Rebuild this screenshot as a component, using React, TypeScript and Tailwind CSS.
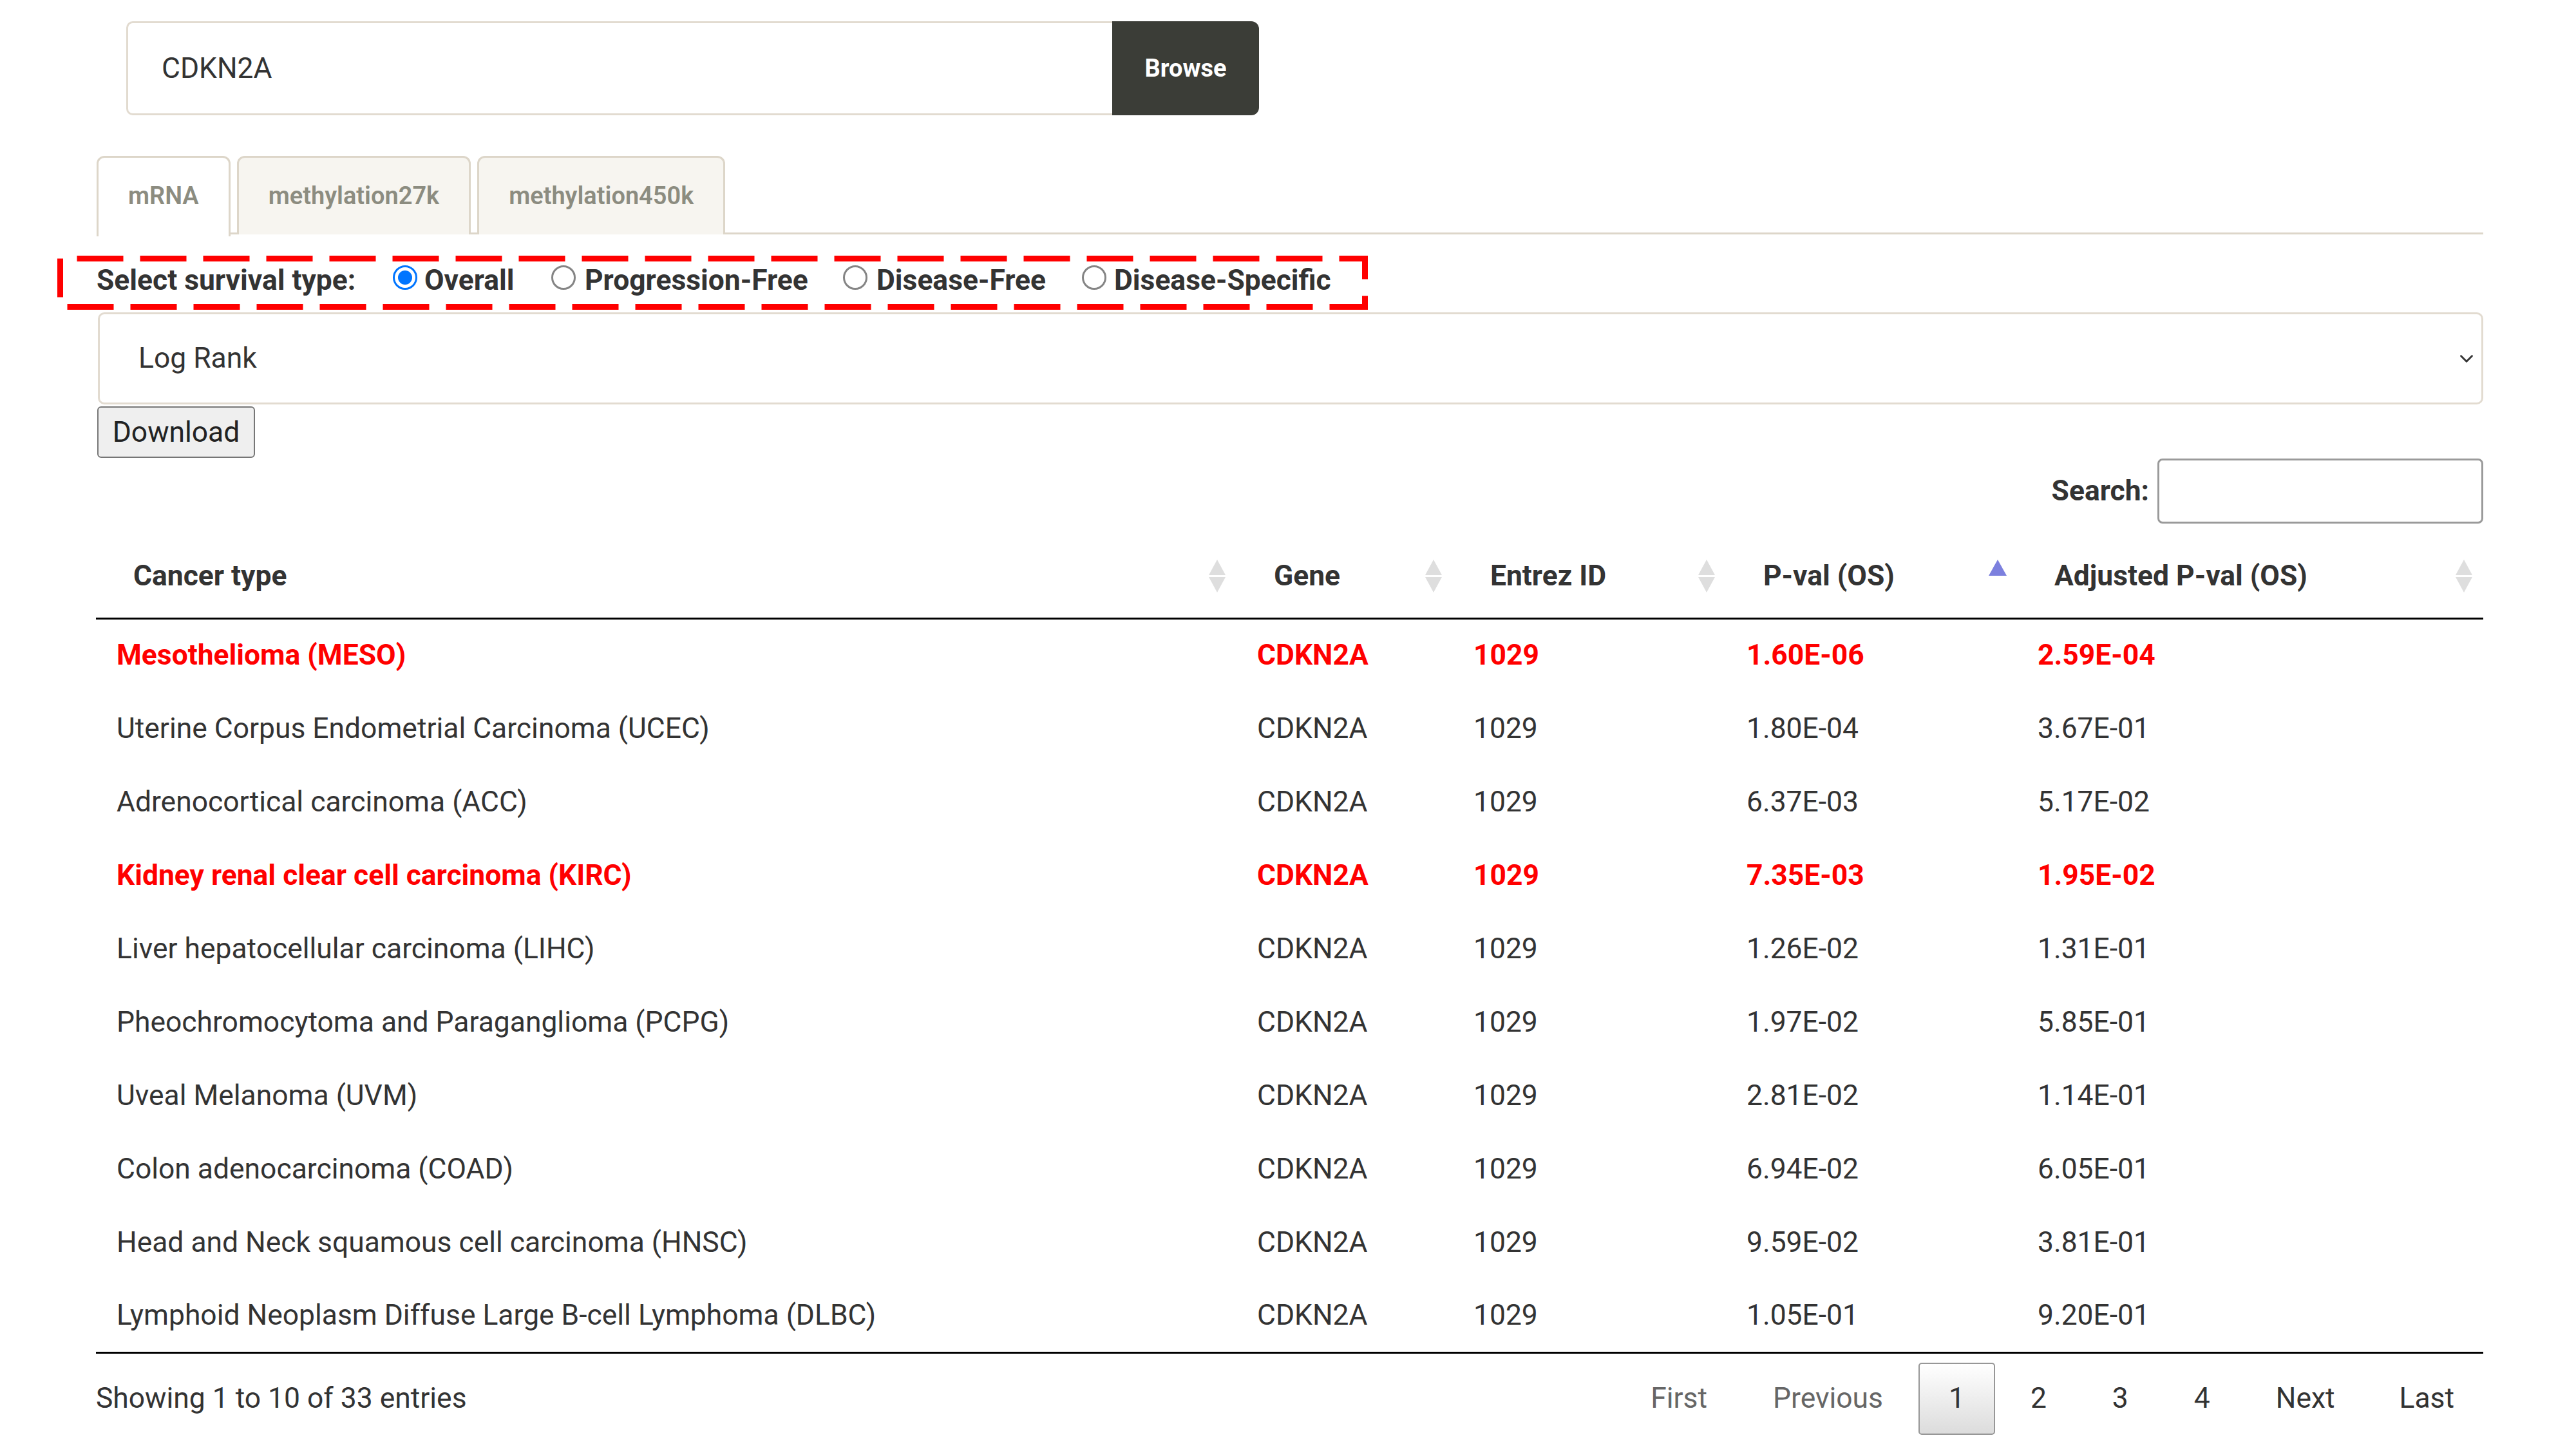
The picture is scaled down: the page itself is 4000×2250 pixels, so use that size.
import React from "react";
import { ChevronDown } from "lucide-react";

type Row = [string, string, string, string, string, boolean];

const rows: Row[] = [
  ["Mesothelioma (MESO)", "CDKN2A", "1029", "1.60E-06", "2.59E-04", true],
  ["Uterine Corpus Endometrial Carcinoma (UCEC)", "CDKN2A", "1029", "1.80E-04", "3.67E-01", false],
  ["Adrenocortical carcinoma (ACC)", "CDKN2A", "1029", "6.37E-03", "5.17E-02", false],
  ["Kidney renal clear cell carcinoma (KIRC)", "CDKN2A", "1029", "7.35E-03", "1.95E-02", true],
  ["Liver hepatocellular carcinoma (LIHC)", "CDKN2A", "1029", "1.26E-02", "1.31E-01", false],
  ["Pheochromocytoma and Paraganglioma (PCPG)", "CDKN2A", "1029", "1.97E-02", "5.85E-01", false],
  ["Uveal Melanoma (UVM)", "CDKN2A", "1029", "2.81E-02", "1.14E-01", false],
  ["Colon adenocarcinoma (COAD)", "CDKN2A", "1029", "6.94E-02", "6.05E-01", false],
  ["Head and Neck squamous cell carcinoma (HNSC)", "CDKN2A", "1029", "9.59E-02", "3.81E-01", false],
  ["Lymphoid Neoplasm Diffuse Large B-cell Lymphoma (DLBC)", "CDKN2A", "1029", "1.05E-01", "9.20E-01", false],
];

function SortIcon({ active }: { active?: boolean }) {
  return (
    <svg width="28" height="51" viewBox="0 0 28 51" className="shrink-0">
      {active ? (
        <path d="M14 0 L28 25 L0 25 Z" fill="#7c80de" />
      ) : (
        <>
          <path d="M14 0 L27 24 L1 24 Z" fill="#dedede" />
          <path d="M1 27 L27 27 L14 51 Z" fill="#dedede" />
        </>
      )}
    </svg>
  );
}

function Radio({ checked }: { checked?: boolean }) {
  return checked ? (
    <span className="w-[38px] h-[38px] mb-[8px] rounded-full border-[3px] border-[#0075ff] flex items-center justify-center shrink-0 bg-white">
      <span className="w-[22px] h-[22px] rounded-full bg-[#0075ff]" />
    </span>
  ) : (
    <span className="w-[38px] h-[38px] mb-[8px] rounded-full border-[3px] border-[#858585] shrink-0 bg-white" />
  );
}

function Th({ label, active }: { label: string; active?: boolean }) {
  return (
    <th className="p-0 h-[143px] align-middle text-left font-bold">
      <div className="flex items-center justify-between pt-[14px] pl-[58px] pr-[16px]">
        <span>{label}</span>
        <SortIcon active={active} />
      </div>
    </th>
  );
}

export default function App() {
  return (
    <div className="w-[4000px] h-[2250px] bg-white text-[#333] font-['Roboto',sans-serif] text-[44.4px] leading-[1.5] overflow-hidden">
      <div className="pt-[33px] pl-[150px] pr-[144px]">
        {/* Search bar */}
        <div className="ml-[46px] flex h-[146px] w-[1759px]">
          <div className="flex-1 border-[3px] border-r-0 border-[#e2dbd0] rounded-l-[10px] flex items-center pl-[52px] text-[#333]">
            CDKN2A
          </div>
          <div className="w-[228px] bg-[#3b3d37] rounded-r-[12px] text-white font-bold text-[38px] flex items-center justify-center">
            Browse
          </div>
        </div>

        {/* Tabs */}
        <div className="mt-[63px] flex gap-[10px] h-[122px] border-b-[3px] border-[#ddd6c9]">
          <div className="h-[125px] -mb-[3px] px-[46px] pb-[3px] bg-white border-[3px] border-b-0 border-[#ddd6c9] rounded-t-[12px] flex items-center text-[38px] font-semibold text-[#8c8c80]">
            mRNA
          </div>
          <div className="h-[122px] px-[46px] bg-[#f7f5f0] border-[3px] border-b-0 border-[#ddd6c9] rounded-t-[12px] flex items-center text-[38px] font-semibold text-[#8c8c80]">
            methylation27k
          </div>
          <div className="h-[122px] px-[46px] bg-[#f7f5f0] border-[3px] border-b-0 border-[#ddd6c9] rounded-t-[12px] flex items-center text-[38px] font-semibold text-[#8c8c80]">
            methylation450k
          </div>
        </div>

        {/* Survival type radios with dashed annotation */}
        <div className="relative mt-[33px] -ml-[61px] w-[2035px] h-[84px] pb-[8px] flex items-center font-bold whitespace-nowrap">
          <span className="pl-[61px] w-[521px] shrink-0">Select survival type:</span>
          <Radio checked />
          <span className="ml-[11px] w-[197px] shrink-0">Overall</span>
          <Radio />
          <span className="ml-[14px] w-[401px] shrink-0">Progression-Free</span>
          <Radio />
          <span className="ml-[14px] w-[319px] shrink-0">Disease-Free</span>
          <Radio />
          <span className="ml-[12px] shrink-0">Disease-Specific</span>
          <svg className="absolute inset-0 pointer-events-none" width="2035" height="84" viewBox="0 0 2035 84">
            <rect
              x="4.5"
              y="4.5"
              width="2026"
              height="75"
              fill="none"
              stroke="#ff0000"
              strokeWidth="9"
              strokeDasharray="72 26"
              strokeDashoffset="72"
            />
          </svg>
        </div>

        {/* Select */}
        <div className="mt-[4px] ml-[2px] h-[143px] border-[3px] border-[#e2dbd0] rounded-[10px] flex items-center justify-between pl-[60px] pr-[6px]">
          <span>Log Rank</span>
          <ChevronDown className="w-[34px] h-[34px] text-[#333]" strokeWidth={2} />
        </div>

        {/* Download */}
        <div className="mt-[3px] ml-[1px]">
          <button className="w-[245px] h-[80px] border-[2px] border-[#767676] rounded-[6px] bg-[#efefef] text-[44.4px] leading-none text-[#222] flex items-center justify-center">
            Download
          </button>
        </div>

        {/* Search */}
        <div className="mt-[1px] h-[101px] flex items-center justify-end">
          <span className="font-bold">Search:</span>
          <div className="ml-[13px] w-[506px] h-[101px] border-[3px] border-[#9a9a9a] rounded-[8px] bg-white" />
        </div>

        {/* Table */}
        <table className="mt-[4px] w-[3707px] -ml-[1px] table-fixed border-collapse">
          <colgroup>
            <col className="w-[1771px]" />
            <col className="w-[336px]" />
            <col className="w-[424px]" />
            <col className="w-[452px]" />
            <col className="w-[724px]" />
          </colgroup>
          <thead>
            <tr className="border-b-[3px] border-black">
              <Th label="Cancer type" />
              <Th label="Gene" />
              <Th label="Entrez ID" />
              <Th label="P-val (OS)" active />
              <Th label="Adjusted P-val (OS)" />
            </tr>
          </thead>
          <tbody className="border-b-[3px] border-black">
            {rows.map((r, i) => (
              <tr key={i} className={r[5] ? "text-[#ff0000] font-bold" : ""}>
                <td className="h-[114px] p-0 pl-[32px] align-middle whitespace-nowrap">{r[0]}</td>
                <td className="h-[114px] p-0 pl-[32px] align-middle">{r[1]}</td>
                <td className="h-[114px] p-0 pl-[32px] align-middle">{r[2]}</td>
                <td className="h-[114px] p-0 pl-[32px] align-middle">{r[3]}</td>
                <td className="h-[114px] p-0 pl-[32px] align-middle">{r[4]}</td>
              </tr>
            ))}
          </tbody>
        </table>

        {/* Footer */}
        <div className="pt-[14px] h-[126px] flex items-center justify-between">
          <span className="-ml-[1px]">Showing 1 to 10 of 33 entries</span>
          <div className="flex items-center gap-[8px]">
            <span className="h-[112px] px-[45px] flex items-center text-[#666] border-[2px] border-transparent">First</span>
            <span className="h-[112px] px-[45px] flex items-center text-[#666] border-[2px] border-transparent">Previous</span>
            <span className="h-[112px] px-[45px] flex items-center text-[#333] border-[2px] border-[#979797] rounded-[5px] bg-linear-to-b from-white to-[#dcdcdc]">1</span>
            <span className="h-[112px] px-[45px] flex items-center text-[#333] border-[2px] border-transparent">2</span>
            <span className="h-[112px] px-[45px] flex items-center text-[#333] border-[2px] border-transparent">3</span>
            <span className="h-[112px] px-[45px] flex items-center text-[#333] border-[2px] border-transparent">4</span>
            <span className="h-[112px] px-[45px] flex items-center text-[#333] border-[2px] border-transparent">Next</span>
            <span className="h-[112px] px-[43px] flex items-center text-[#333] border-[2px] border-transparent">Last</span>
          </div>
        </div>
      </div>
    </div>
  );
}
